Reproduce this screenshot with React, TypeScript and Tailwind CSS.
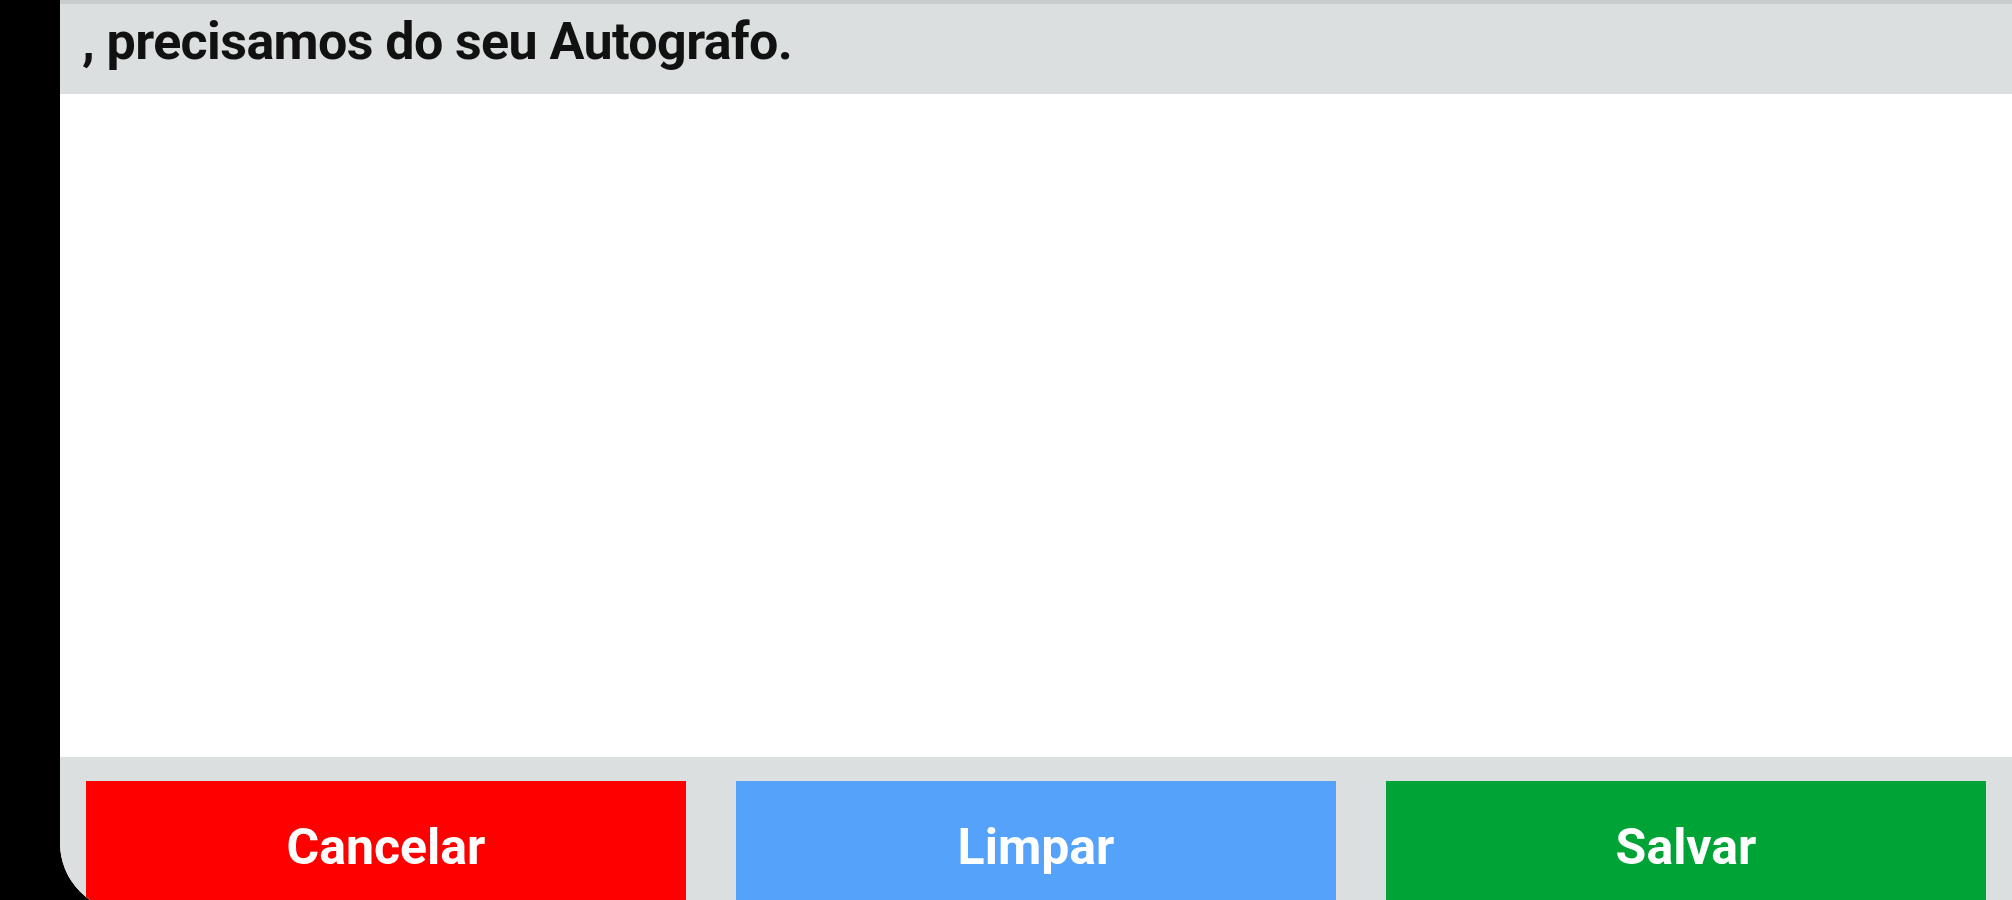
export default function App() {
  return (
    <div className="flex h-[900px] w-[2012px] items-start overflow-hidden bg-black" style={{ fontFamily: 'Roboto, "Liberation Sans", sans-serif' }}>
      <div className="h-full w-[60px] shrink-0 bg-black" />
      <div className="flex h-[912px] flex-1 shrink-0 flex-col overflow-hidden rounded-bl-[69px] bg-white">
        <header className="flex h-[94px] shrink-0 items-center border-t-[4px] border-[#c9cccd] bg-[#dcdfe0] pl-[22px]">
          <p className="pb-[14px] text-[52px] font-bold tracking-[-0.6px] text-[#111]">, precisamos do seu Autografo.</p>
        </header>
        <div className="flex-1 bg-white" />
        <footer className="h-[155px] shrink-0 bg-[#dcdfe0] px-[26px] pt-[24px]">
          <div className="grid grid-cols-3 gap-[50px]">
            <button className="h-[132px] bg-[#ff0000] text-[50px] font-bold text-white">Cancelar</button>
            <button className="h-[132px] bg-[#55a2fb] text-[50px] font-bold text-white">Limpar</button>
            <button className="h-[132px] bg-[#00a335] text-[50px] font-bold text-white">Salvar</button>
          </div>
        </footer>
      </div>
    </div>
  );
}
